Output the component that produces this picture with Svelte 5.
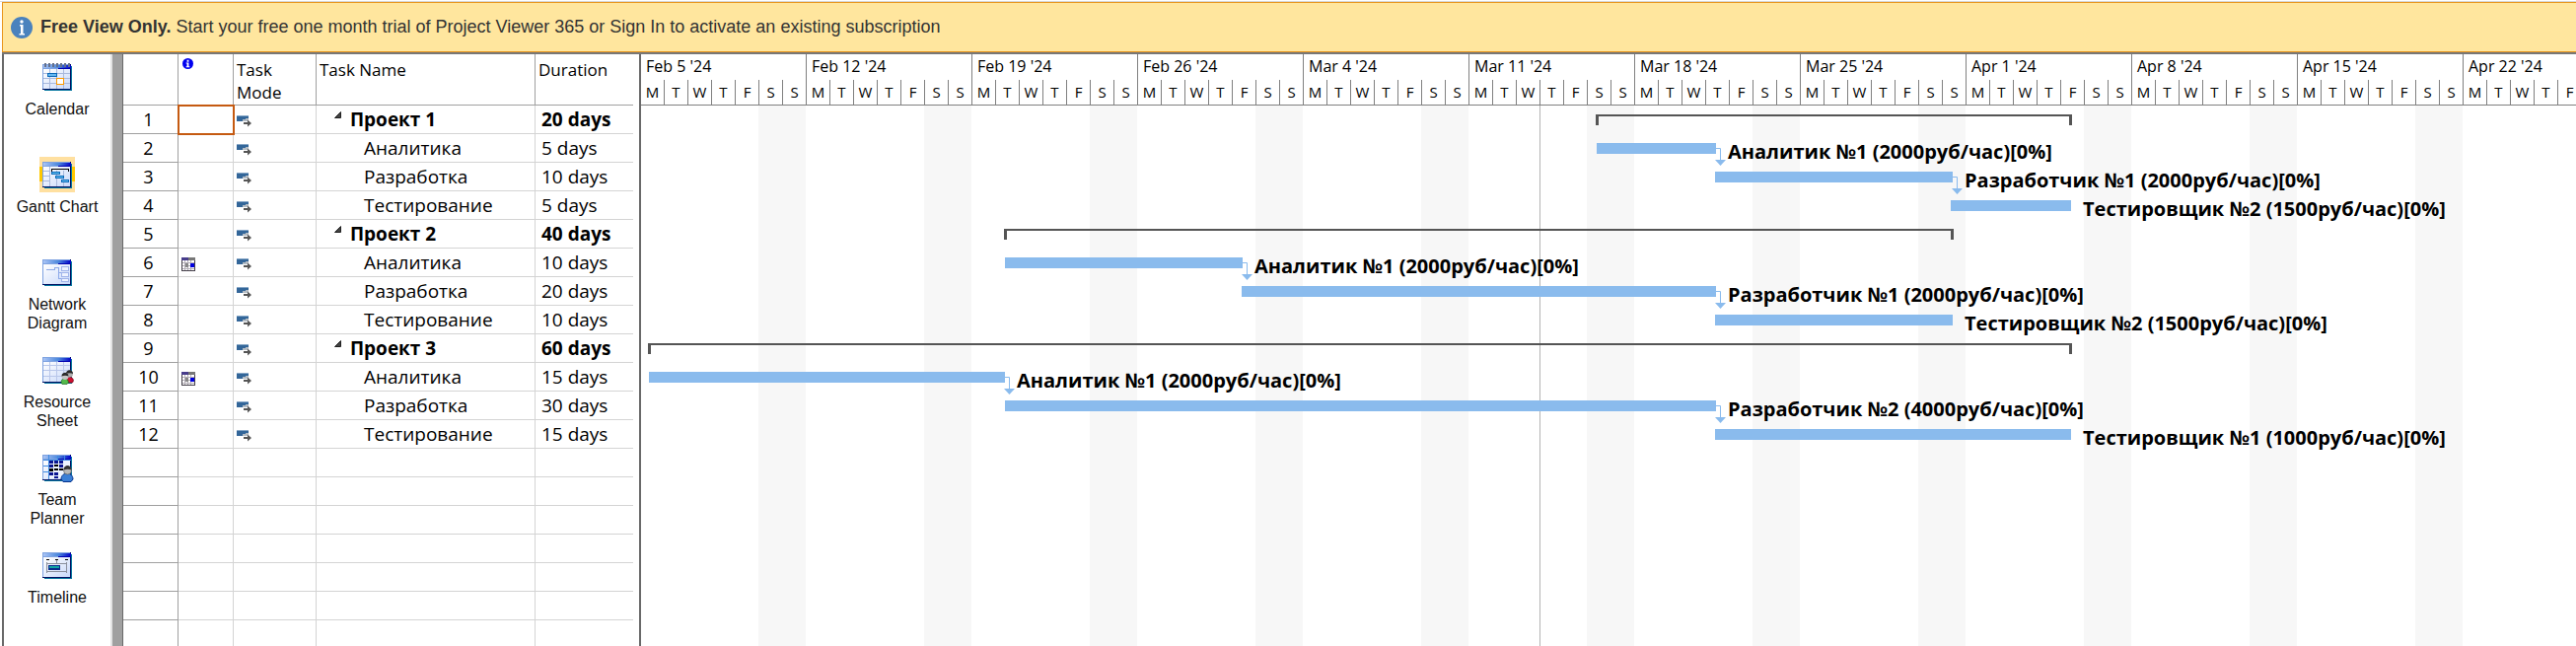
<script>
  const DAY = 24;
  const weeks = ["Feb 5 '24", "Feb 12 '24", "Feb 19 '24", "Feb 26 '24", "Mar 4 '24", "Mar 11 '24", "Mar 18 '24", "Mar 25 '24", "Apr 1 '24", "Apr 8 '24", "Apr 15 '24", "Apr 22 '24"];
  const letters = ['M', 'T', 'W', 'T', 'F', 'S', 'S'];
  // The visible range ends on a Friday.
  const lettersOf = (week) => (week === weeks.length - 1 ? letters.slice(0, 5) : letters);

  const tasks = [
    { name: 'Проект 1', days: 20, summary: true, left: 969, width: 483 },
    { name: 'Аналитика', days: 5, left: 970, width: 121, label: 'Аналитик №1 (2000руб/час)[0%]', link: true },
    { name: 'Разработка', days: 10, left: 1090, width: 241, label: 'Разработчик №1 (2000руб/час)[0%]', link: true },
    { name: 'Тестирование', days: 5, left: 1329, width: 122, label: 'Тестировщик №2 (1500руб/час)[0%]' },
    { name: 'Проект 2', days: 40, summary: true, left: 369, width: 963 },
    { name: 'Аналитика', days: 10, left: 370, width: 241, label: 'Аналитик №1 (2000руб/час)[0%]', link: true, pinned: true },
    { name: 'Разработка', days: 20, left: 610, width: 481, label: 'Разработчик №1 (2000руб/час)[0%]', link: true },
    { name: 'Тестирование', days: 10, left: 1090, width: 241, label: 'Тестировщик №2 (1500руб/час)[0%]' },
    { name: 'Проект 3', days: 60, summary: true, left: 8, width: 1444 },
    { name: 'Аналитика', days: 15, left: 9, width: 361, label: 'Аналитик №1 (2000руб/час)[0%]', link: true, pinned: true },
    { name: 'Разработка', days: 30, left: 370, width: 721, label: 'Разработчик №2 (4000руб/час)[0%]', link: true },
    { name: 'Тестирование', days: 15, left: 1090, width: 361, label: 'Тестировщик №1 (1000руб/час)[0%]' }
  ];
  const blankRows = Array.from({ length: 7 });
  const views = ['Calendar', 'Gantt Chart', 'Network Diagram', 'Resource Sheet', 'Team Planner', 'Timeline'];
</script>

<svelte:head><title>Project Viewer 365</title></svelte:head>

<svg width="0" height="0" class="defs" aria-hidden="true">
  <defs>
    <linearGradient id="bar"><stop offset="0" stop-color="#a9c4f5" /><stop offset=".55" stop-color="#4a86dc" /><stop offset="1" stop-color="#0000c8" /></linearGradient>
    <linearGradient id="pane" x2="1" y2="1"><stop offset="0" stop-color="#fff" /><stop offset="1" stop-color="#c9d9fa" /></linearGradient>
  </defs>
</svg>

<div class="app">
  <div class="banner">
    <svg width="22" height="22" viewBox="0 0 22 22" aria-hidden="true">
      <circle cx="11" cy="11" r="11" fill="#4a82bd" />
      <circle cx="11" cy="5" r="1.700" fill="#fff" />
      <path d="M9 8h3.500v9H14v1.500H8.500V17H10V9.500H9z" fill="#fff" />
    </svg>
    <p><b>Free View Only.</b> Start your free one month trial of Project Viewer 365 or Sign In to activate an existing subscription</p>
  </div>

  <main>
    <nav aria-label="Views">
      {#each views as view, i}
        <button class:active={i === 1}>
          <span class="glyph">
            <svg width="30" height="28" viewBox="0 0 30 28" shape-rendering="crispEdges" aria-hidden="true">
              <rect x="2" y="3" width="28" height="25" fill="#0878a0" />
              <rect y="1" width="29" height="26" fill="#001060" />
              <rect y="1" width="28" height="25" fill="#7fa3e0" />
              <rect x="1" y="6" width="27" height="20" fill="url(#pane)" />
              <rect x="1" y="2" width="28" height="3" fill="url(#bar)" />
              <rect x="16" y="5" width="13" height="1" fill="#0000b0" />
              {#if i === 0}
                <path d="M2 0h2v4H2zM6 0h2v4H6zM10 0h2v4h-2zM14 0h2v4h-2zM18 0h2v4h-2zM22 0h2v4h-2zM26 0h2v4h-2z" fill="#64718c" />
                <path d="M7.500 6v20M14.500 6v20M21.500 6v20M1 10.500h27M1 15.500h27M1 20.500h27" stroke="#a9b9dc" fill="none" />
                <rect x="5" y="10" width="9" height="3" fill="#67b8f0" stroke="#0a68b8" />
                <rect x="14.500" y="15.500" width="7" height="6" fill="#fff" stroke="#ff9a00" />
              {:else if i === 1}
                <path d="M7.500 6v20M1 10.500h6M1 15.500h6M1 20.500h6M14.500 10v16M21.500 10v16" stroke="#a9b9dc" fill="none" />
                <path d="M9 8h18v3h-1V9H10v2H9z" fill="#000" />
                <path d="M9.500 11.500h8v2h-8zM13.500 15.500h8v2h-8zM19.500 19.500h7v2h-7z" fill="#67c4f4" stroke="#0a68b8" />
              {:else if i === 2}
                <path d="M4 11.500h8v-2h4M16.500 9v12M16 14.500h3M16 20.500h3" stroke="#8eaae8" fill="none" />
                <path d="M19.500 8.500h7v4h-7zM19.500 14.500h7v4h-7zM19.500 20.500h7v3h-7z" fill="#eef3ff" stroke="#a0b4ea" />
              {:else if i === 3}
                <path d="M7.500 6v20M14.500 6v20M21.500 6v20M1 9.500h27M1 14.500h27M1 20.500h27" stroke="#b9c7ea" fill="none" />
              {:else if i === 4}
                <path d="M1 6h28M6.500 1v25M15.500 2v5M22.500 2v5M1 12.500h5M1 18.500h5" stroke="#3d8ae0" fill="none" />
                <path d="M7 7h21v18H7z" fill="#eef4ff" />
                <path d="M7 7h4v3H7zM12 7h4v3h-4zM17 7h4v3h-4zM7 11h4v3H7zM17 11h4v3h-4zM7 19h4v3H7zM12 19h4v3h-4zM12 23h4v2h-4z" fill="#0a1490" />
                <path d="M12 11h4v2h-4zM7 15h4v3H7zM12 15h4v2h-4zM17 15h4v2h-4z" fill="#000" />
              {:else}
                <path d="M4 8h3v1H4zM13 8h3v1h-3zM23 8h3v1h-3z" fill="#000" />
                <path d="M4.500 11v11M24.500 11v11M14.500 9v3M4 12.500h21M4 20.500h21" stroke="#8a8f9c" fill="none" />
                <path d="M6 14h12v5H6z" fill="#0a2a8c" /><path d="M7 15h10v2H7z" fill="#10a5a5" />
              {/if}
            </svg>
            {#if i === 3}
              <svg class="people" width="14" height="15" viewBox="0 0 14 15" aria-hidden="true">
                <path d="M6 12c0-6 7-6 7.500-1l-1 2H7z" fill="#d01030" stroke="#5a0010" stroke-width=".6" />
                <circle cx="9.500" cy="4" r="3.500" fill="#b0b0b0" /><path d="M6 4c0-5 7-5 7 0-2-1-5-1-7 0z" fill="#2a2a2a" />
                <path d="M1 13c0-6 7-6 7.500 0L7 14.500H2z" fill="#53b94a" stroke="#0b5a18" stroke-width=".6" />
                <circle cx="5" cy="6.500" r="3.500" fill="#c4c4c4" /><path d="M1.500 6.500c0-5 7-5 7 0-2-1-5-1-7 0z" fill="#2a2a2a" />
              </svg>
            {:else if i === 4}
              <svg class="people" width="14" height="17" viewBox="0 0 14 17" aria-hidden="true">
                <path d="M1 14c0-8 12-8 12 0l-2 2.500H3z" fill="#3b7fd6" stroke="#06338c" />
                <circle cx="7.500" cy="5" r="4" fill="#b8b8b8" stroke="#555" stroke-width=".6" /><path d="M3.500 4.500c0-6 8-6 8 0-2.500-1-5-1-8 0z" fill="#333" />
              </svg>
            {/if}
          </span>
          <span class="caption">{view}</span>
        </button>
      {/each}
    </nav>

    <div class="sheet">
      <table>
        <colgroup><col class="c-id" /><col class="c-ind" /><col class="c-mode" /><col class="c-name" /><col class="c-dur" /></colgroup>
        <thead>
          <tr>
            <th aria-label="ID"></th>
            <th aria-label="Indicators">
              <svg class="ind" width="11" height="11" viewBox="0 0 12 12"><circle cx="6" cy="6" r="6" fill="#0000f0" /><path d="M5 2h2v2H5zM4 5h3v4h1v1H4V9h1V6H4z" fill="#fff" /></svg>
            </th>
            <th>Task<br />Mode</th>
            <th>Task Name</th>
            <th>Duration</th>
          </tr>
        </thead>
        <tbody>
          {#each tasks as t, i}
            <tr class:summary={t.summary}>
              <td class="num">{i + 1}</td>
              <td class="indicator" class:selected={i === 0}>
                {#if t.pinned}
                  <svg width="14" height="14" viewBox="0 0 14 14" shape-rendering="crispEdges" aria-label="Constraint">
                    <rect width="14" height="14" fill="#45404a" /><rect x="1" y="3" width="12" height="10" fill="#fff" />
                    <rect width="7" height="3" fill="#483d8b" /><rect x="7" width="7" height="3" fill="#777" />
                    <path d="M3.500 3v10M6.500 3v10M9.500 3v10M1 5.500h12M1 8.500h12M1 11.500h12" stroke="#b5b0b8" />
                    <rect x="4" y="6" width="3" height="4" fill="#888" /><rect x="9" y="6" width="4" height="4" fill="#0000e0" />
                  </svg>
                {/if}
              </td>
              <td class="mode">
                <svg width="15" height="12" viewBox="0 0 15 12" aria-label="Auto scheduled">
                  <path d="M0 0h12v6H0z" fill="#336699" /><path d="M0 0h12v1H0z" fill="#86a6c6" />
                  <path d="M6 4h3v2H6zM9 3h3v3H9z" fill="#b4bcc4" />
                  <path d="M7 7h4V4.500l4 3.500-4 3.500V9H7z" fill="#555" />
                </svg>
              </td>
              <td class="name">
                {#if t.summary}
                  <svg width="7" height="7" viewBox="0 0 7 7" aria-hidden="true"><path d="M6.500.5v6h-6z" fill="#444" stroke="#222" /></svg>
                {/if}
                <span>{t.name}</span>
              </td>
              <td class="dur">{t.days} days</td>
            </tr>
          {/each}
          {#each blankRows as _}
            <tr><td class="num"></td><td></td><td></td><td></td><td></td></tr>
          {/each}
        </tbody>
      </table>
    </div>

    <section class="chart" aria-label="Gantt chart">
      <div class="scale">
        {#each weeks as w, n}
          <div class="week">
            <div class="date">{w}</div>
            <div class="days">{#each lettersOf(n) as l}<span>{l}</span>{/each}</div>
          </div>
        {/each}
      </div>
      <div class="canvas">
        <i class="today" style:left="{38 * DAY}px"></i>
        {#each tasks as t}
          <div class="lane">
            {#if t.summary}
              <i class="bracket" style:margin-left="{t.left}px" style:width="{t.width}px"></i>
            {:else}
              <i class="bar" style:margin-left="{t.left}px" style:width="{t.width}px">
                {#if t.link}
                  <svg width="12" height="18" viewBox="0 0 12 18" aria-hidden="true"><path d="M1 .5h4.500V12" fill="none" stroke="#8abbed" /><path d="M0 12h11l-5.500 6z" fill="#8abbed" /></svg>
                {/if}
              </i>
              <span class="label">{t.label}</span>
            {/if}
          </div>
        {/each}
      </div>
    </section>
  </main>
</div>

<style>
  :global(body) { margin: 0; background: #fff; }
  .defs { position: absolute; }
  .app { display: flex; flex-direction: column; height: 100vh; min-height: 480px; overflow: hidden; padding: 1px 0 0 2px; box-sizing: border-box; border-top: 1px solid #fff; background: linear-gradient(#d8d8d8 1px, #fff 1px); color: #000; font-family: "Open Sans", "Noto Sans", sans-serif; }
  .banner { display: flex; align-items: center; gap: 8px; height: 49px; flex: none; padding-left: 8px; background: #ffe69e; border: 1px solid #e8951c; border-right: 0; font: 18px "Liberation Sans", Arial, sans-serif; color: #333; }
  .banner p { margin: 0; white-space: nowrap; }
  main { display: flex; flex: 1; min-height: 0; border-top: 2px solid #777; }
  nav { display: flex; flex-direction: column; flex: none; width: 108px; border-left: 2px solid #696969; border-right: 2px solid #e3e3e3; padding-top: 5px; }
  button { display: flex; flex-direction: column; align-items: center; height: 99px; flex: none; padding: 0; border: 0; background: none; color: #111; font: 16px/19px "Liberation Sans", Arial, sans-serif; }
  .glyph { position: relative; display: grid; place-items: center; width: 36px; height: 36px; margin-bottom: 5px; }
  .active .glyph { background: linear-gradient(#ffe0a0 10px, transparent 10px 25px, #ffe0a0 25px), linear-gradient(90deg, #ffc800 3px, #ffe0a0 3px 33px, #ffc800 33px); }
  .people { position: absolute; right: 1px; bottom: 3px; }
  .caption { width: 88px; }
  .sheet { flex: none; box-sizing: border-box; border-left: 10px solid #a0a0a0; overflow: hidden; width: 534px; border-right: 6px solid #fff; }
  table { border-collapse: separate; border-spacing: 0; table-layout: fixed; width: 519px; border-left: 1px solid #696969; font-size: 19px; }
  .c-id { width: 56px; } .c-ind { width: 56px; } .c-mode { width: 84px; } .c-name { width: 222px; } .c-dur { width: 100px; }
  th, td { box-sizing: border-box; padding: 0; border-right: 1px solid #d4d4d4; border-bottom: 1px solid #d4d4d4; }
  th { height: 52px; vertical-align: top; text-align: left; font-size: 17px; font-weight: 400; line-height: 23px; padding: 4px 3px 0; border-color: #a0a0a0; }
  th:last-child { border-right-color: #e0e0e0; }
  td { height: 29px; line-height: 28px; white-space: nowrap; }
  td.num { text-align: center; padding-right: 4px; border-color: #a0a0a0; font-size: 18px; line-height: 26px; }
  .ind { display: block; margin-left: 1px; }
  .indicator { padding-left: 3px; }
  .indicator.selected { outline: 2px solid #c55a11; outline-offset: -1px; }
  .mode { padding-left: 3px; }
  td svg { vertical-align: middle; }
  .name { padding-left: 48px; }
  .summary .name { padding-left: 18px; }
  .summary .name svg { vertical-align: 8px; margin-right: 4px; }
  .summary .name, .summary .dur { font-weight: 700; }
  .dur { padding-left: 6px; }
  .chart { flex: 1; min-width: 0; overflow: hidden; border-left: 2px solid #696969; display: flex; flex-direction: column; }
  .scale { display: flex; height: 51px; flex: none; border-bottom: 1px solid #808080; }
  .week { flex: none; width: 168px; display: flex; flex-direction: column; border-right: 1px solid #808080; box-sizing: border-box; }
  .date { height: 26px; line-height: 25px; padding-left: 5px; font-size: 16px; }
  .days { display: flex; flex: 1; font-size: 15px; }
  .days span { width: 24px; box-sizing: border-box; border-right: 1px solid #808080; text-align: center; line-height: 25px; flex: none; }
  .days span:nth-child(7) { border: 0; width: 23px; }
  .canvas { position: relative; flex: 1; margin-left: -1px; background: repeating-linear-gradient(90deg, transparent 0 120px, #f7f7f7 120px 168px); }
  .today { position: absolute; top: 0; bottom: 0; width: 1px; background: #b4b4b4; }
  .lane { position: relative; display: flex; height: 29px; align-items: flex-start; }
  .bar { position: relative; flex: none; height: 11px; margin-top: 9px; background: #8abbed; }
  .bar svg { position: absolute; left: 100%; top: 5px; margin-left: -1px; }
  .bracket { flex: none; box-sizing: border-box; height: 11px; margin-top: 9px; border: 3px solid #555; border-width: 2px 3px 0; }
  .label { margin-left: 12px; font-size: 20px; font-weight: 700; line-height: 35px; white-space: nowrap; }
</style>
